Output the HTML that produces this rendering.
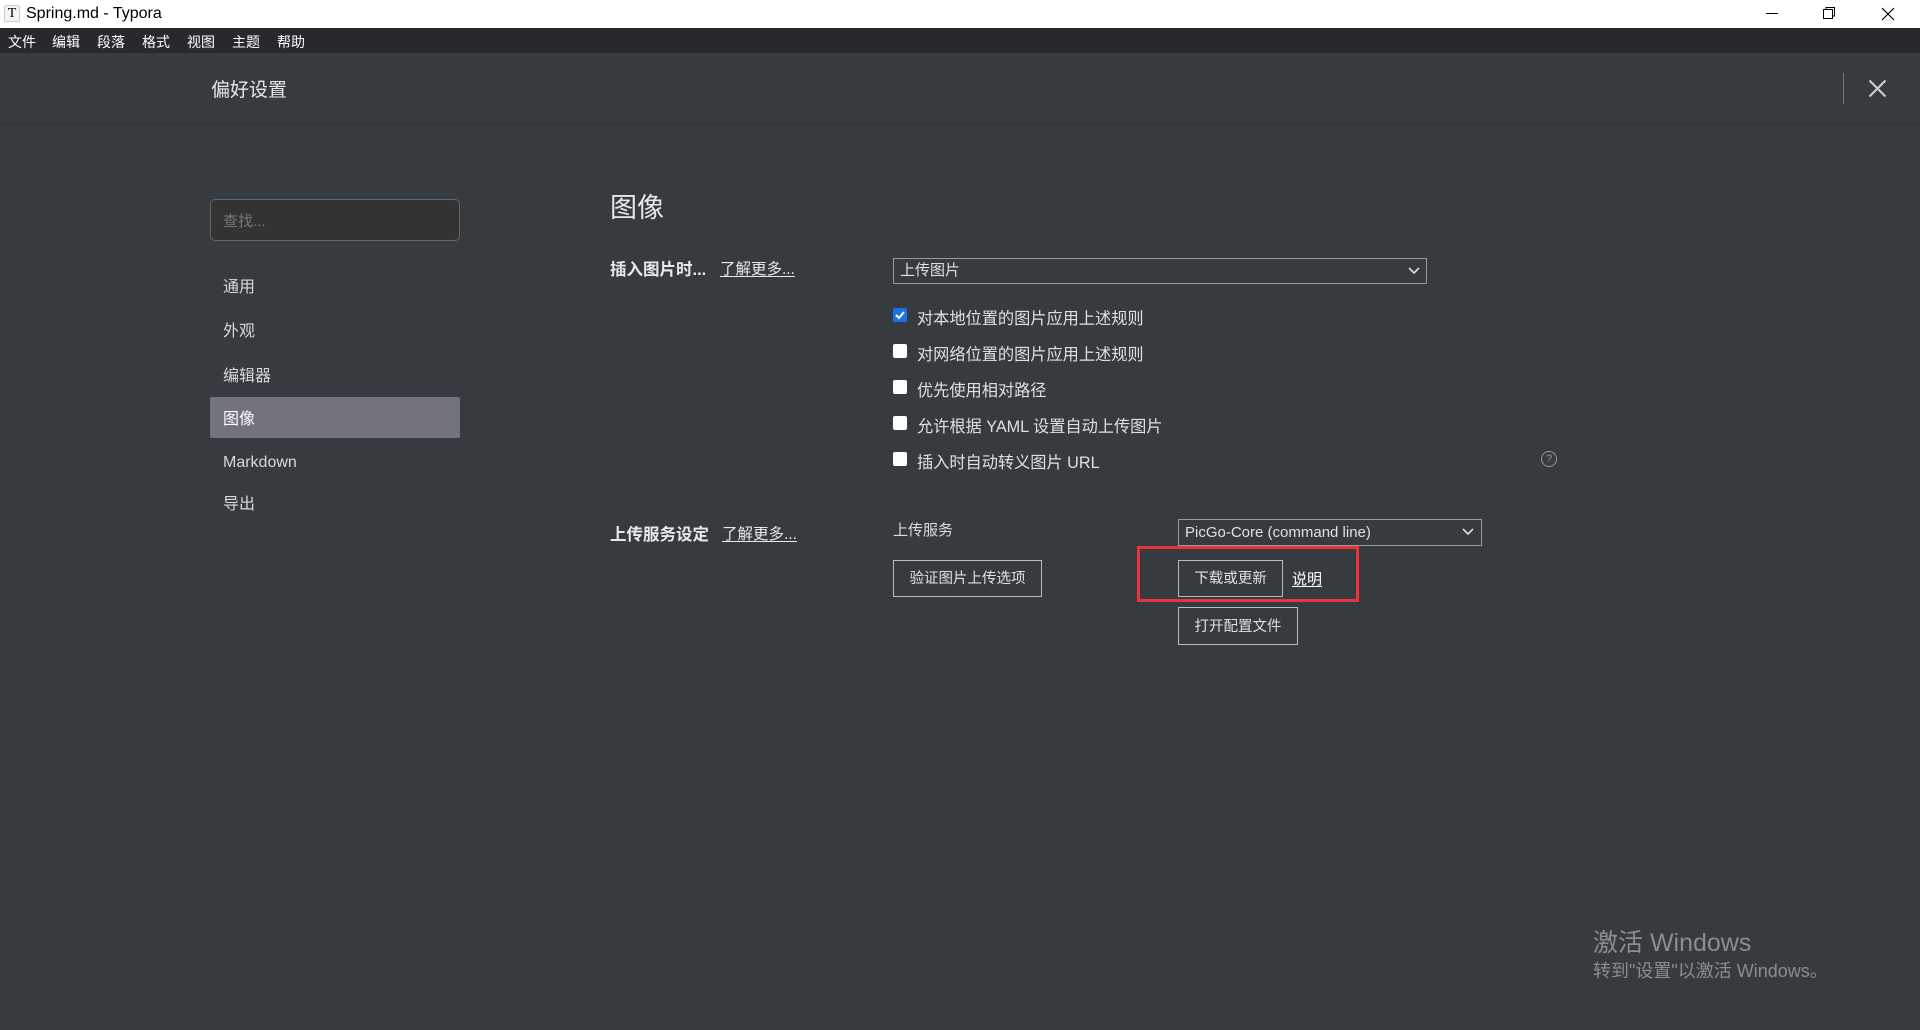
<!DOCTYPE html>
<html><head><meta charset="utf-8"><style>
*{margin:0;padding:0;box-sizing:border-box}
body{width:1920px;height:1030px;background:#363b40;font-family:"Liberation Sans","Noto Sans CJK SC",sans-serif;color:#dcdcdc;position:relative;overflow:hidden}
.a{position:absolute;white-space:nowrap}
#tb{left:0;top:0;width:1920px;height:28px;background:#fff;color:#000;font-size:16px}
#mb{left:0;top:28px;width:1920px;height:25px;background:#27292d;color:#fff;font-size:14px}
.cb{position:absolute;width:14px;height:14px;background:#fff;border-radius:2px;left:893px}
.lbl{font-size:16.2px;color:#e0e0e0}
.btn{position:absolute;border:1px solid #bbb;color:#e0e0e0;font-size:14.5px;text-align:center}
.sel{position:absolute;border:1px solid #999;font-size:15px;color:#e0e0e0;padding-left:6px}
.nav{left:223px;font-size:16px;color:#d8d8d8}
u{text-underline-offset:2px}
</style></head><body>
<div class="a" id="tb">
 <div class="a" style="left:4px;top:5px;width:16px;height:17px;border:1px solid #ccc;border-radius:2px;font-family:'Liberation Serif',serif;font-size:14px;text-align:center;line-height:15px;background:#f4f4f4">T</div>
 <div class="a" style="left:26px;top:5px;font-size:16px">Spring.md - Typora</div>
 <div class="a" style="left:1766px;top:13px;width:12px;height:1px;background:#000"></div>
 <svg class="a" style="left:1822px;top:6px" width="14" height="14"><rect x="1.5" y="3.5" width="9" height="9" fill="none" stroke="#000"/><path d="M4 3.5V1.5h8.5v8.5h-2" fill="none" stroke="#000"/></svg>
 <svg class="a" style="left:1881px;top:7px" width="14" height="14"><path d="M1 1L13 13M13 1L1 13" stroke="#000" stroke-width="1.2"/></svg>
</div>
<div class="a" id="mb">
 <span class="a" style="left:8px;top:4px">文件</span><span class="a" style="left:52px;top:4px">编辑</span><span class="a" style="left:97px;top:4px">段落</span><span class="a" style="left:142px;top:4px">格式</span><span class="a" style="left:187px;top:4px">视图</span><span class="a" style="left:232px;top:4px">主题</span><span class="a" style="left:277px;top:4px">帮助</span>
</div>
<div class="a" style="left:211px;top:75px;font-size:19px;color:#e8e8e8">偏好设置</div>
<div class="a" style="left:0;top:123px;width:1920px;height:1px;background:#2f3337"></div>
<div class="a" style="left:1843px;top:73px;width:1px;height:31px;background:#777"></div>
<svg class="a" style="left:1868px;top:79px" width="19" height="19"><path d="M1.5 1.5L17.5 17.5M17.5 1.5L1.5 17.5" stroke="#ccc" stroke-width="2.2"/></svg>

<div class="a" style="left:210px;top:199px;width:250px;height:42px;background:#333;border:1px solid #666;border-radius:5px"></div>
<div class="a" style="left:223px;top:210px;font-size:15px;color:#777">查找...</div>
<div class="a nav" style="top:273px">通用</div>
<div class="a nav" style="top:317px">外观</div>
<div class="a nav" style="top:362px">编辑器</div>
<div class="a" style="left:210px;top:397px;width:250px;height:41px;background:#72737d;border-radius:2px"></div>
<div class="a nav" style="top:405px;color:#fff">图像</div>
<div class="a nav" style="top:454px">Markdown</div>
<div class="a nav" style="top:490px">导出</div>

<div class="a" style="left:610px;top:186px;font-size:27px;color:#e8e8e8">图像</div>
<div class="a" style="left:610px;top:256px;font-size:16.5px;font-weight:bold;color:#e8e8e8">插入图片时...</div>
<div class="a" style="left:720px;top:257px;font-size:15.5px;color:#e8e8e8"><u>了解更多...</u></div>
<div class="sel" style="left:893px;top:258px;width:534px;height:26px;line-height:24px">上传图片</div>
<svg class="a" style="left:1408px;top:266px" width="12" height="10"><path d="M1 2l5 5 5-5" fill="none" stroke="#ddd" stroke-width="1.6"/></svg>

<div class="cb" style="top:308px;background:#1a73e8"></div>
<svg class="a" style="left:893px;top:308px" width="14" height="14"><path d="M3 7l3 3 5-6" fill="none" stroke="#fff" stroke-width="2"/></svg>
<div class="a lbl" style="left:917px;top:305px">对本地位置的图片应用上述规则</div>
<div class="cb" style="top:344px"></div>
<div class="a lbl" style="left:917px;top:341px">对网络位置的图片应用上述规则</div>
<div class="cb" style="top:380px"></div>
<div class="a lbl" style="left:917px;top:377px">优先使用相对路径</div>
<div class="cb" style="top:416px"></div>
<div class="a lbl" style="left:917px;top:413px">允许根据 YAML 设置自动上传图片</div>
<div class="cb" style="top:452px"></div>
<div class="a lbl" style="left:917px;top:449px">插入时自动转义图片 URL</div>
<div class="a" style="left:1541px;top:451px;width:16px;height:16px;border:1.3px solid #999;border-radius:50%;font-size:11px;color:#999;text-align:center;line-height:14px">?</div>

<div class="a" style="left:610px;top:521px;font-size:16.5px;font-weight:bold;color:#e8e8e8">上传服务设定</div>
<div class="a" style="left:722px;top:522px;font-size:15.5px;color:#e8e8e8"><u>了解更多...</u></div>
<div class="a" style="left:893px;top:519px;font-size:15px;color:#ddd">上传服务</div>
<div class="sel" style="left:1178px;top:519px;width:304px;height:27px;line-height:25px">PicGo-Core (command line)</div>
<svg class="a" style="left:1462px;top:527px" width="12" height="10"><path d="M1 2l5 5 5-5" fill="none" stroke="#ddd" stroke-width="1.6"/></svg>
<div class="btn" style="left:893px;top:560px;width:149px;height:37px;line-height:37px">验证图片上传选项</div>
<div class="a" style="left:1137px;top:546px;width:222px;height:56px;border:3px solid #e8343a"></div>
<div class="btn" style="left:1178px;top:560px;width:105px;height:37px;line-height:37px">下载或更新</div>
<div class="a" style="left:1292px;top:568px;font-size:15px;color:#fff"><u>说明</u></div>
<div class="btn" style="left:1178px;top:607px;width:120px;height:38px;line-height:38px">打开配置文件</div>

<div class="a" style="left:1593px;top:923px;font-size:25px;color:#8a8d91">激活 Windows</div>
<div class="a" style="left:1593px;top:957px;font-size:18px;color:#8a8d91">转到"设置"以激活 Windows。</div>
</body></html>
